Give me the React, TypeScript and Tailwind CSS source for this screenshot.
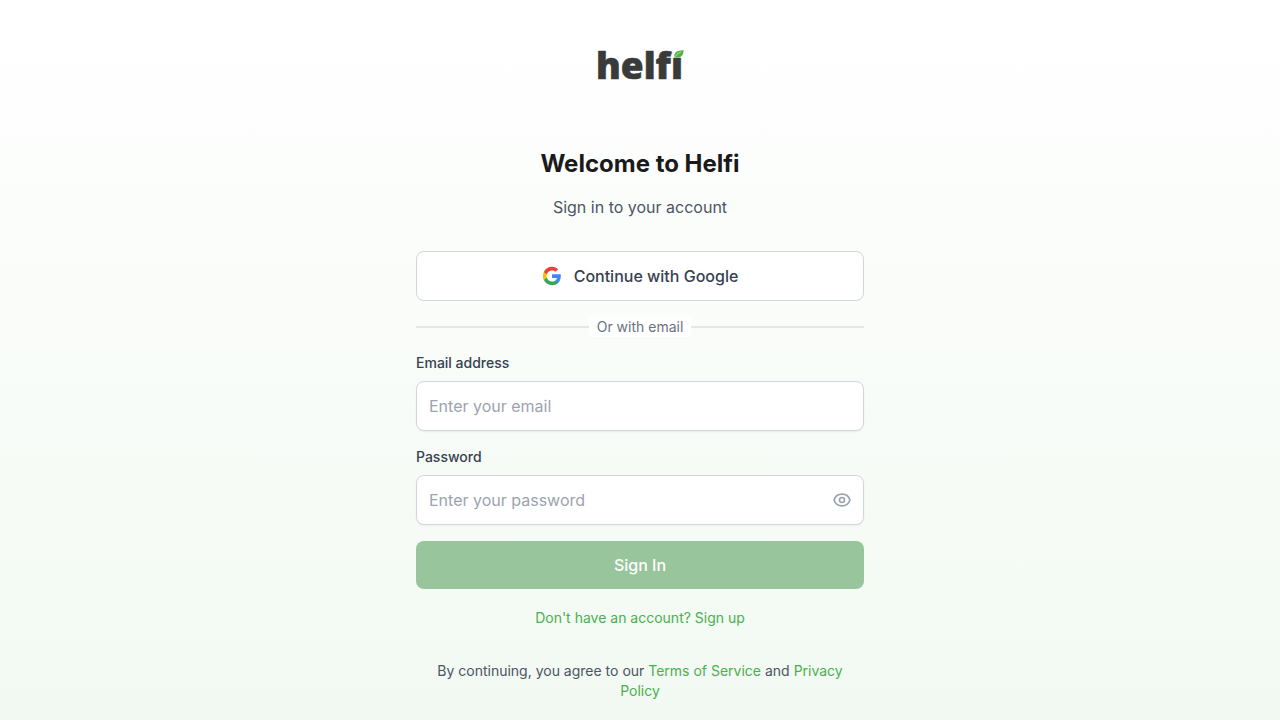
import { useState } from "react";

const inputClass =
  "block w-full rounded-lg border border-gray-300 bg-white p-3 text-base leading-6 text-gray-900 shadow-xs placeholder:text-[#9ca3af] focus:outline-2 focus:outline-[#4caf50]";

function Logo() {
  return (
    <svg className="h-14 w-28" viewBox="0 0 112 56" role="img" aria-label="helfi">
      <text
        x="12"
        y="43"
        fontSize="37"
        fontWeight="800"
        fill="#3a3a3a"
        stroke="#3a3a3a"
        strokeWidth=".6"
        strokeLinejoin="round"
        className="font-['Open_Sans',sans-serif]"
      >
        helfı
      </text>
      <path d="M90.300 21.200c-.4-3.900 1.700-5.900 4.900-6.500 1.800-.3 3.300-.3 4.300-1 .3 4.500-1.600 7.700-6 7.900-1.200.1-2.300-.1-3.200-.4z" fill="#55b045" />
      <path d="M90.600 21c1.800-2.400 3.800-4 6.300-5" stroke="#dff2d8" strokeWidth=".7" fill="none" />
    </svg>
  );
}

function GoogleIcon() {
  return (
    <svg className="size-5" viewBox="0 0 24 24" aria-hidden="true">
      <path fill="#4285F4" d="M22.56 12.25c0-.78-.07-1.53-.2-2.25H12v4.26h5.92c-.26 1.37-1.04 2.53-2.21 3.31v2.77h3.57c2.08-1.92 3.28-4.74 3.28-8.09z" />
      <path fill="#34A853" d="M12 23c2.97 0 5.46-.98 7.28-2.66l-3.57-2.77c-.98.66-2.23 1.06-3.71 1.06-2.86 0-5.29-1.93-6.16-4.53H2.18v2.84C3.99 20.53 7.7 23 12 23z" />
      <path fill="#FBBC05" d="M5.84 14.09c-.22-.66-.35-1.36-.35-2.09s.13-1.43.35-2.09V7.07H2.18C1.43 8.55 1 10.22 1 12s.43 3.45 1.18 4.93l2.85-2.22.81-.62z" />
      <path fill="#EA4335" d="M12 5.38c1.62 0 3.06.56 4.21 1.64l3.15-3.15C17.45 2.09 14.97 1 12 1 7.7 1 3.99 3.47 2.18 7.07l3.66 2.84c.87-2.6 3.3-4.53 6.16-4.53z" />
    </svg>
  );
}

export default function App() {
  const [visible, setVisible] = useState(false);
  return (
    <div className="flex min-h-screen flex-col items-center bg-linear-to-b from-white to-[#f2f9f2] px-4 pt-9 pb-4 font-['Inter',sans-serif]">
      <header className="flex flex-col items-center">
        <Logo />
      </header>
      <main className="mt-14 w-full max-w-md">
        <div className="text-center">
          <h1 className="text-2xl leading-8 font-bold text-[#1a1a1a]">Welcome to Helfi</h1>
          <p className="mt-[15px] text-base leading-6 text-[#4b5563]">Sign in to your account</p>
        </div>

        <button
          type="button"
          className="mt-8 flex w-full items-center justify-center gap-3 rounded-lg border border-gray-300 bg-white p-3 text-base leading-6 font-medium text-[#374151]"
        >
          <GoogleIcon />
          Continue with Google
        </button>

        <div className="mt-4 flex items-center text-sm leading-5 text-[#6b7280]">
          <span className="h-0.5 flex-1 bg-[#e3e7e9]" />
          <span className="bg-white px-2">Or with email</span>
          <span className="h-0.5 flex-1 bg-[#e3e7e9]" />
        </div>

        <form className="mt-4 flex flex-col gap-4" onSubmit={(e) => e.preventDefault()}>
          <div>
            <label htmlFor="email" className="mb-2 block text-sm leading-5 font-medium text-[#374151]">
              Email address
            </label>
            <input id="email" type="email" placeholder="Enter your email" className={inputClass} />
          </div>
          <div>
            <label htmlFor="password" className="mb-2 block text-sm leading-5 font-medium text-[#374151]">
              Password
            </label>
            <div className="relative">
              <input
                id="password"
                type={visible ? "text" : "password"}
                placeholder="Enter your password"
                className={inputClass}
              />
              <button
                type="button"
                aria-label="Show password"
                onClick={() => setVisible(!visible)}
                className="absolute inset-y-0 right-0 flex items-center pr-3 text-[#9ca3af]"
              >
                <svg className="size-5" viewBox="0 0 24 24" fill="none" stroke="currentColor" strokeWidth="2" strokeLinecap="round" strokeLinejoin="round" aria-hidden="true">
                  <path d="M15 12a3 3 0 11-6 0 3 3 0 016 0z" />
                  <path d="M2.458 12C3.732 7.943 7.523 5 12 5c4.478 0 8.268 2.943 9.542 7-1.274 4.057-5.064 7-9.542 7-4.477 0-8.268-2.943-9.542-7z" />
                </svg>
              </button>
            </div>
          </div>
          <button type="submit" className="w-full rounded-lg bg-[#98c59b] p-3 text-base leading-6 font-medium text-white">
            Sign In
          </button>
        </form>

        <div className="mt-4 text-center text-base leading-6">
          <a href="#signup" className="text-sm leading-5 text-[#4caf50]">
            Don't have an account? Sign up
          </a>
        </div>

        <p className="mt-8 px-4 text-center text-sm leading-5 text-[#4b5563]">
          By continuing, you agree to our{" "}
          <a href="#terms" className="text-[#4caf50]">
            Terms of Service
          </a>{" "}
          and{" "}
          <a href="#privacy" className="text-[#4caf50]">
            Privacy Policy
          </a>
        </p>
      </main>
    </div>
  );
}
